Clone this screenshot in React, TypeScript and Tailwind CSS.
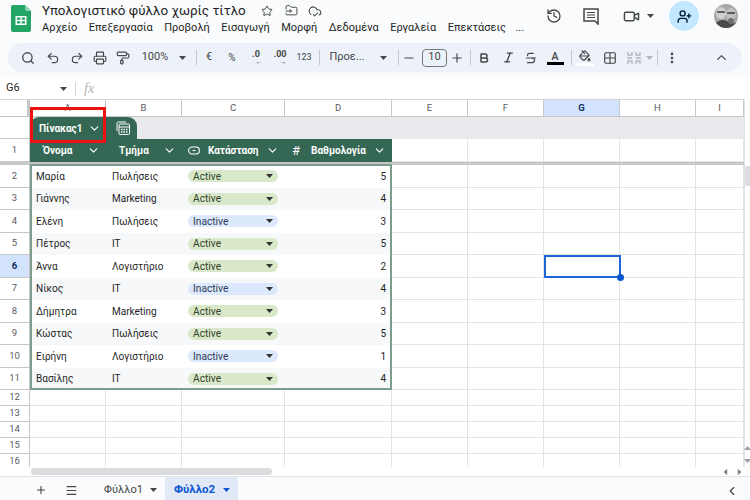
import {
  Search,
  Undo2,
  Redo2,
  Printer,
  PaintRoller,
  Minus,
  Plus,
  Bold,
  Italic,
  Strikethrough,
  PaintBucket,
  Grid2x2,
  EllipsisVertical,
  ChevronUp,
  ChevronDown,
  ChevronLeft,
  Star,
  FolderInput,
  CloudCheck,
  History,
  Video,
  UserPlus,
  Menu,
} from "lucide-react"

const COLS =
  "grid grid-cols-[30px_76px_76px_103px_107px_76px_76px_76px_76px_48px]"
const CELL = "border-r border-b border-[#e3e3e3]"
const LETTERS = ["A", "B", "C", "D", "E", "F", "G", "H", "I"]
const MENU = [
  "Αρχείο",
  "Επεξεργασία",
  "Προβολή",
  "Εισαγωγή",
  "Μορφή",
  "Δεδομένα",
  "Εργαλεία",
  "Επεκτάσεις",
]

const ROWS = [
  ["Μαρία", "Πωλήσεις", "Active", 5],
  ["Γιάννης", "Marketing", "Active", 4],
  ["Ελένη", "Πωλήσεις", "Inactive", 3],
  ["Πέτρος", "IT", "Active", 5],
  ["Άννα", "Λογιστήριο", "Active", 2],
  ["Νίκος", "IT", "Inactive", 4],
  ["Δήμητρα", "Marketing", "Active", 3],
  ["Κώστας", "Πωλήσεις", "Active", 5],
  ["Ειρήνη", "Λογιστήριο", "Inactive", 1],
  ["Βασίλης", "IT", "Active", 4],
] as const

function Caret({ className = "" }: { className?: string }) {
  return (
    <svg width="7" height="4" viewBox="0 0 7 4" className={className}>
      <path d="M0 0h7L3.5 4z" fill="currentColor" />
    </svg>
  )
}

function Divider() {
  return <div className="h-[15px] w-px shrink-0 bg-[#c7c7c7]" />
}

function SheetsLogo() {
  return (
    <svg width="20" height="27" viewBox="0 0 20 27" className="shrink-0">
      <path d="M2 0h12l6 6v19a2 2 0 0 1-2 2H2a2 2 0 0 1-2-2V2a2 2 0 0 1 2-2z" fill="#23a566" />
      <path d="M14 0l6 6h-4a2 2 0 0 1-2-2z" fill="#8ed1b1" />
      <path d="M4.5 11h11v9h-11z" fill="#fff" />
      <path d="M6 12.5h3.3v2.3H6zM10.7 12.5H14v2.3h-3.3zM6 16.2h3.3v2.3H6zM10.7 16.2H14v2.3h-3.3z" fill="#23a566" />
    </svg>
  )
}

function Avatar() {
  return (
    <svg width="24" height="24" viewBox="0 0 24 24" className="rounded-full">
      <rect width="24" height="24" fill="#a8a8a8" />
      <ellipse cx="7" cy="9" rx="5" ry="6" fill="#d0d0d0" />
      <ellipse cx="17" cy="10" rx="5" ry="6" fill="#c2c2c2" />
      <path d="M3 8h8M13 9h8" stroke="#3c3c3c" strokeWidth="1.6" />
      <path d="M0 24c1-6 5-8 9-8s5 2 7 3 6 0 8-2v7z" fill="#4a4a4a" />
      <circle cx="17" cy="17" r="3" fill="#6f6f6f" />
    </svg>
  )
}

function TopBar() {
  return (
    <div className="flex h-[43px] shrink-0 pl-[11px] pr-[12px]">
      <div className="mt-[5px]">
        <SheetsLogo />
      </div>
      <div className="ml-[11px] flex flex-col">
        <div className="flex h-[21px] items-center">
          <span className="text-[13.4px] leading-[21px] text-[#1f1f1f]">
            Υπολογιστικό φύλλο χωρίς τίτλο
          </span>
          <Star className="ml-[15px] h-[12px] w-[12px] text-[#444746]" strokeWidth={2} />
          <FolderInput className="ml-[12px] h-[13px] w-[13px] text-[#444746]" strokeWidth={1.8} />
          <CloudCheck className="ml-[10px] h-[14px] w-[14px] text-[#444746]" strokeWidth={1.8} />
        </div>
        <div className="flex items-center gap-[11.5px] text-[11px] leading-[14px] text-[#1f1f1f]">
          {MENU.map((m) => (
            <span key={m}>{m}</span>
          ))}
          <span className="ml-[-2px]">...</span>
        </div>
      </div>
      <div className="ml-auto flex items-start pt-[1px] text-[#444746]">
        <History className="mt-[7px] h-[16px] w-[16px]" strokeWidth={2} />
        <svg width="16" height="17" viewBox="0 0 16 17" fill="none" stroke="currentColor" strokeWidth="1.5" className="ml-[21px] mt-[7px]">
          <path d="M1 1h14v15l-3-3H1z" />
          <path d="M4 4.5h8M4 7h8M4 9.5h8" strokeWidth="1.2" />
        </svg>
        <Video className="ml-[24px] mt-[7px] h-[17px] w-[17px]" strokeWidth={2} />
        <Caret className="ml-[7px] mt-[13px]" />
        <div className="ml-[15px] flex h-[30px] w-[30px] items-center justify-center rounded-full bg-[#c2e7ff] text-[#001d35]">
          <UserPlus className="h-[15px] w-[15px]" strokeWidth={2.2} />
        </div>
        <div className="ml-[15px] mt-[3px] h-[24px] w-[24px]">
          <Avatar />
        </div>
      </div>
    </div>
  )
}

function Tool({ children, className }: { children: React.ReactNode; className: string }) {
  return (
    <div className={`flex shrink-0 items-center justify-center whitespace-nowrap text-[#444746] ${className}`}>
      {children}
    </div>
  )
}

function Toolbar() {
  const icon = "h-[14px] w-[14px]"
  return (
    <div className="mx-[8px] flex h-[29px] shrink-0 items-center rounded-full bg-[#edf2fa] pl-[8px] text-[#444746]">
      <Tool className="w-[24px]"><Search className={icon} strokeWidth={2.2} /></Tool>
      <Tool className="ml-[1px] w-[24px]"><Undo2 className={icon} strokeWidth={2} /></Tool>
      <Tool className="w-[24px]"><Redo2 className={icon} strokeWidth={2} /></Tool>
      <Tool className="w-[22px]"><Printer className={icon} strokeWidth={2} /></Tool>
      <Tool className="w-[24px]"><PaintRoller className={icon} strokeWidth={2} /></Tool>
      <Tool className="ml-[1px] w-[38px]"><span className="text-[11px]">100%</span></Tool>
      <Tool className="ml-[4px] w-[8px]"><Caret /></Tool>
      <Tool className="ml-[9px] w-[2px]"><Divider /></Tool>
      <Tool className="ml-[6px] w-[12px]"><span className="text-[11px]">€</span></Tool>
      <Tool className="ml-[10px] w-[14px]"><span className="text-[10px]">%</span></Tool>
      <Tool className="ml-[9px] w-[16px]">
        <div className="flex flex-col items-center leading-none">
          <span className="text-[9px] font-bold leading-[9px]">.0</span>
          <span className="ml-[6px] text-[7px] leading-[6px]">←</span>
        </div>
      </Tool>
      <Tool className="ml-[4px] w-[24px]">
        <div className="flex flex-col items-center leading-none">
          <span className="text-[9px] font-bold leading-[9px]">.00</span>
          <span className="ml-[6px] text-[7px] leading-[6px]">→</span>
        </div>
      </Tool>
      <Tool className="ml-[1px] w-[22px]"><span className="text-[9px]">123</span></Tool>
      <Tool className="ml-[3px] w-[2px]"><Divider /></Tool>
      <Tool className="ml-[7px] w-[40px]"><span className="text-[11px]">Προε...</span></Tool>
      <Tool className="ml-[12px] w-[8px]"><Caret /></Tool>
      <Tool className="ml-[10px] w-[2px]"><Divider /></Tool>
      <Tool className="ml-[3px] w-[14px]"><Minus className={icon} strokeWidth={2} /></Tool>
      <Tool className="ml-[6px] w-[25px]">
        <div className="flex h-[18px] w-[25px] items-center justify-center rounded-[4px] border border-[#747775] text-[11px]">10</div>
      </Tool>
      <Tool className="ml-[3px] w-[14px]"><Plus className={icon} strokeWidth={2} /></Tool>
      <Tool className="ml-[5px] w-[2px]"><Divider /></Tool>
      <Tool className="ml-[6px] w-[14px]"><Bold className="h-[12px] w-[12px]" strokeWidth={3} /></Tool>
      <Tool className="ml-[10px] w-[14px]"><Italic className="h-[13px] w-[13px]" strokeWidth={2.5} /></Tool>
      <Tool className="ml-[9px] w-[14px]"><Strikethrough className={icon} strokeWidth={2} /></Tool>
      <Tool className="ml-[8px] w-[18px]">
        <div className="flex flex-col items-center">
          <span className="text-[10.5px] font-medium leading-[11px]">A</span>
          <div className="h-[3px] w-[17px] bg-black" />
        </div>
      </Tool>
      <Tool className="ml-[6px] w-[2px]"><Divider /></Tool>
      <Tool className="ml-[4px] w-[18px]">
        <div className="flex flex-col items-center">
          <PaintBucket className="h-[12px] w-[12px]" strokeWidth={2.4} />
          <div className="mt-[1px] h-[3px] w-[17px] bg-white" />
        </div>
      </Tool>
      <Tool className="ml-[9px] w-[14px]"><Grid2x2 className={icon} strokeWidth={2} /></Tool>
      <Tool className="ml-[10px] w-[14px]">
        <svg width="14" height="14" viewBox="0 0 14 14" fill="none" stroke="#b4b7ba" strokeWidth="1.4">
          <path d="M1 1v3h4V1M9 1v3h4V1M1 13v-3h4v3M9 13v-3h4v3M0 7h5M9 7h5" />
        </svg>
      </Tool>
      <Tool className="ml-[4px] w-[8px] text-[#b4b7ba]"><Caret /></Tool>
      <Tool className="ml-[3px] w-[2px]"><Divider /></Tool>
      <Tool className="ml-[7px] w-[14px]"><EllipsisVertical className={icon} strokeWidth={2.6} /></Tool>
      <Tool className="ml-[34px] w-[16px]"><ChevronUp className="h-[15px] w-[15px]" strokeWidth={2} /></Tool>
    </div>
  )
}

function FormulaBar() {
  return (
    <div className="mt-[6px] flex h-[21px] shrink-0 items-center bg-white pl-[6px] text-[#444746]">
      <span className="w-[54px] text-[11px] text-[#1f1f1f]">G6</span>
      <Caret />
      <div className="ml-[8px] h-[14px] w-px bg-[#d5d5d5]" />
      <span className="ml-[8px] font-['Liberation_Serif',serif] text-[14px] italic text-[#b0b3b6]">fx</span>
    </div>
  )
}

function ColumnHeaders() {
  return (
    <div className={`${COLS} h-[18px] border-t border-[#d5d5d5]`}>
      <div className="border-r-[3px] border-b border-[#c4c7c5] bg-white" />
      {LETTERS.map((c) => (
        <div
          key={c}
          className={`flex items-center justify-center border-r border-b border-[#c7c7c7] text-[9.5px] ${
            c === "G" ? "bg-[#d3e3fd] font-bold text-[#0b2b60]" : "bg-white text-[#575a5e]"
          }`}
        >
          {c}
        </div>
      ))}
    </div>
  )
}

function HeaderCell({
  label,
  lead,
  className = "",
}: {
  label: string
  lead?: React.ReactNode
  className?: string
}) {
  return (
    <div className={`flex items-center bg-[#356854] pr-[6px] text-[10px] font-bold text-white ${className}`}>
      {lead}
      <span>{label}</span>
      <ChevronDown className="ml-auto h-[13px] w-[13px]" strokeWidth={2} />
    </div>
  )
}

function RowLabel({ n, active }: { n: number; active?: boolean }) {
  return (
    <div
      className={`flex items-center justify-center border-r border-b border-[#c7c7c7] text-[9.5px] ${
        active ? "bg-[#d3e3fd] font-bold text-[#0b2b60]" : "bg-white text-[#575a5e]"
      }`}
    >
      {n}
    </div>
  )
}

function Chip({ status }: { status: string }) {
  const on = status === "Active"
  return (
    <div
      className={`flex h-[12px] w-[90px] items-center justify-between rounded-full pl-[5px] pr-[5px] text-[10.2px] ${
        on ? "bg-[#d9e8c9] text-[#33422c]" : "bg-[#dce8fb] text-[#2d3d56]"
      }`}
    >
      <span>{status}</span>
      <Caret className="text-[#333]" />
    </div>
  )
}

function EmptyCells({ count }: { count: number }) {
  return (
    <>
      {Array.from({ length: count }, (_, i) => (
        <div key={i} className={CELL} />
      ))}
    </>
  )
}

function TableIcon() {
  return (
    <svg width="14" height="14" viewBox="0 0 14 14" fill="none" stroke="#fff" strokeWidth="1">
      <path d="M1 10V2.5A1.5 1.5 0 0 1 2.500 1H10" />
      <rect x="3" y="3" width="10.500" height="10.500" rx="1" />
      <path d="M3 6h10.500" />
      <path d="M5 8.500h1.500M7.500 8.500H9M10 8.500h1.500M5 11h1.500M7.500 11H9M10 11h1.500" strokeWidth="1.3" />
    </svg>
  )
}

function Sheet() {
  return (
    <div className="relative flex h-[368px] shrink-0 overflow-hidden bg-white">
      <div className="w-[744px] shrink-0">
        <ColumnHeaders />

        <div className={`${COLS} h-[22px]`}>
          <div className="border-r border-b border-[#c7c7c7] bg-white" />
          <div className="col-span-9 flex bg-[#e8eaed]">
            <div className="flex w-[107px] shrink-0 items-center rounded-t-[9px] bg-[#356854] pl-[9px] text-white">
              <span className="w-[43px] whitespace-nowrap text-[10px] font-bold">Πίνακας1</span>
              <ChevronDown className="ml-[6px] h-[13px] w-[13px]" strokeWidth={2} />
              <div className="ml-[15px]">
                <TableIcon />
              </div>
            </div>
          </div>
        </div>

        <div className={`${COLS} h-[23px]`}>
          <RowLabel n={1} />
          <HeaderCell label="Όνομα" className="pl-[13px]" />
          <HeaderCell label="Τμήμα" className="pl-[13px]" />
          <HeaderCell
            label="Κατάσταση"
            className="pl-[6px]"
            lead={
              <svg width="12" height="9" viewBox="0 0 12 9" fill="none" stroke="#fff" strokeWidth="1.1" className="mr-[8px]">
                <rect x="0.6" y="1" width="10.8" height="7" rx="3.5" />
                <path d="M4.5 4.5h3" />
              </svg>
            }
          />
          <HeaderCell
            label="Βαθμολογία"
            className="pl-[7px]"
            lead={<span className="mr-[11px] text-[13px] font-normal">#</span>}
          />
          <EmptyCells count={5} />
        </div>

        <div className="h-[3px] bg-[#c8c8c8]" />

        {ROWS.map((r, i) => (
          <div key={r[0]} className={`${COLS} h-[22.5px]`}>
            <RowLabel n={i + 2} active={i === 4} />
            <div className={`col-span-4 grid grid-cols-[76px_76px_103px_107px] items-center text-[10px] text-[#1f1f1f] ${i % 2 === 1 ? "bg-[#f6f8f9]" : "bg-white"}`}>
              <span className="pl-[6px]">{r[0]}</span>
              <span className="pl-[6px]">{r[1]}</span>
              <div className="pl-[6px]">
                <Chip status={r[2]} />
              </div>
              <span className="pr-[6px] text-right">{r[3]}</span>
            </div>
            <EmptyCells count={5} />
          </div>
        ))}

        {[12, 13, 14, 15, 16].map((n) => (
          <div key={n} className={`${COLS} h-[16px]`}>
            <RowLabel n={n} />
            <EmptyCells count={9} />
          </div>
        ))}
      </div>

      <div className="flex w-[6px] flex-col border-l border-[#e3e3e3] pt-[67px]">
        <div className="h-[20px] w-[5px] rounded-l-[2px] bg-[#dadce0]" />
        <div className="mt-auto mb-[4px] flex flex-col items-center gap-[9px] text-[#9aa0a6]">
          <Caret className="rotate-180" />
          <Caret />
        </div>
      </div>

      {/* table outline */}
      <div className="pointer-events-none absolute left-[30px] top-[65px] h-[226px] w-[362px] border-2 border-[#7c9c8c]" />
      {/* red annotation around the table name */}
      <div className="pointer-events-none absolute left-[30px] top-[8px] h-[36px] w-[76px] border-[3px] border-[#ee1111]" />
      {/* selected cell G6 */}
      <div className="pointer-events-none absolute left-[544px] top-[156px] h-[23px] w-[77px] border-2 border-[#1a66d6]">
        <div className="absolute right-[-5px] bottom-[-5px] h-[7px] w-[7px] rounded-full bg-[#0b57d0]" />
      </div>
    </div>
  )
}

function HScroll() {
  return (
    <div className="flex h-[10px] shrink-0 items-center border-b border-[#e3e3e3] bg-white pl-[31px]">
      <div className="h-[7px] w-[241px] rounded-full bg-[#dadce0]" />
      <div className="ml-auto flex h-full w-[28px] items-center justify-between pr-[7px] text-[#80868b]">
        <Caret className="rotate-90" />
        <Caret className="-rotate-90" />
      </div>
    </div>
  )
}

function SheetTabs() {
  return (
    <div className="flex h-[23px] shrink-0 items-stretch bg-[#f9fbfd] text-[#444746]">
      <div className="flex w-[82px] items-center pl-[35px] pt-[3px]">
        <Plus className="h-[12px] w-[12px]" strokeWidth={2.2} />
        <Menu className="ml-[18px] h-[13px] w-[13px]" strokeWidth={2.2} />
      </div>
      <div className="flex w-[83px] items-center pl-[22px] pt-[3px]">
        <span className="text-[11.1px]">Φύλλο1</span>
        <Caret className="ml-[7px]" />
      </div>
      <div className="flex w-[73px] items-center bg-[#e1e9f7] pl-[9px] pt-[3px] text-[#0b57d0]">
        <span className="text-[11.6px] font-bold">Φύλλο2</span>
        <Caret className="ml-[8px]" />
      </div>
      <ChevronLeft className="ml-auto mr-[11px] mt-[7px] h-[14px] w-[14px]" strokeWidth={2} />
    </div>
  )
}

export default function App() {
  return (
    <div className="flex h-[500px] w-[750px] flex-col overflow-hidden bg-[#f9fbfd] font-['Roboto',sans-serif]">
      <TopBar />
      <Toolbar />
      <FormulaBar />
      <Sheet />
      <HScroll />
      <SheetTabs />
    </div>
  )
}
